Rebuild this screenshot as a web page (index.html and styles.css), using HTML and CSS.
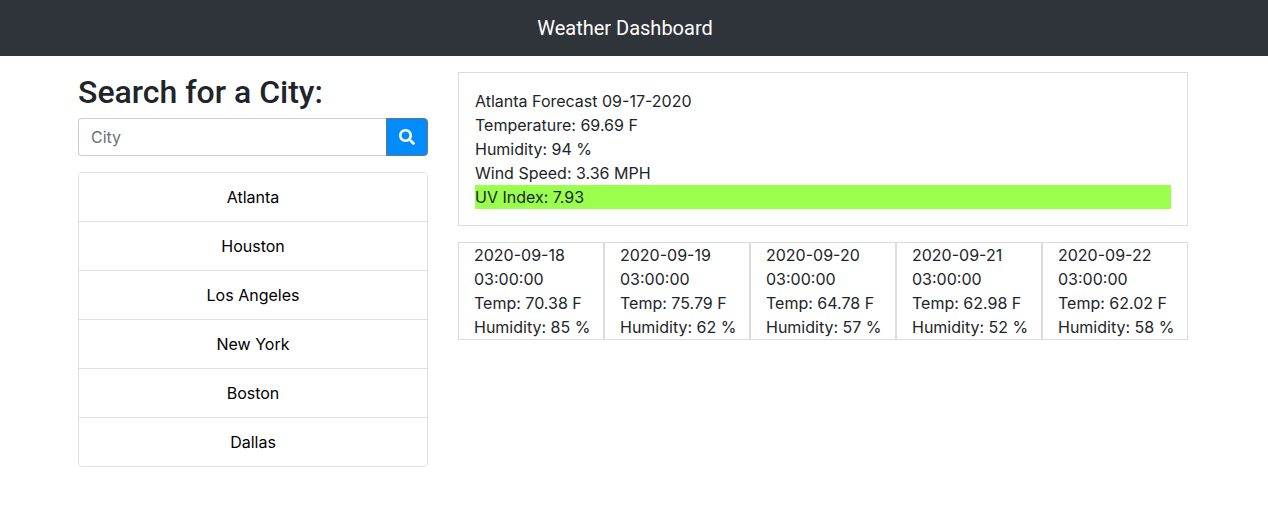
FILE: index.html
```html
<!DOCTYPE html>
<html lang="en">
<head>
<meta charset="utf-8">
<meta name="viewport" content="width=device-width, initial-scale=1">
<title>Weather Dashboard</title>
<link rel="stylesheet" href="styles.css">
</head>
<body>
<header class="navbar"><a class="brand" href="#">Weather Dashboard</a></header>
<main class="container">
  <aside class="sidebar">
    <h2 class="title"><label for="city">Search for a City:</label></h2>
    <form class="search">
      <input class="search-input" id="city" type="text" placeholder="City">
      <button class="search-button" type="button" aria-label="Search">
        <svg class="search-icon" viewBox="0 0 512 512" aria-hidden="true"><path fill="currentColor" d="M505 442.700L405.300 343c-4.500-4.500-10.600-7-17-7H372c27.600-35.300 44-79.700 44-128C416 93.100 322.900 0 208 0S0 93.100 0 208s93.100 208 208 208c48.300 0 92.700-16.400 128-44v16.300c0 6.400 2.500 12.500 7 17l99.700 99.700c9.400 9.400 24.600 9.400 33.900 0l28.300-28.300c9.400-9.400 9.400-24.600.1-34zM208 336c-70.700 0-128-57.200-128-128 0-70.700 57.200-128 128-128 70.700 0 128 57.200 128 128 0 70.700-57.200 128-128 128z"/></svg>
      </button>
    </form>
    <div class="cities">
      <button class="city" type="button">Atlanta</button>
      <button class="city" type="button">Houston</button>
      <button class="city" type="button">Los Angeles</button>
      <button class="city" type="button">New York</button>
      <button class="city" type="button">Boston</button>
      <button class="city" type="button">Dallas</button>
    </div>
  </aside>
  <section class="weather">
    <div class="current">
      <div>Atlanta Forecast 09-17-2020</div>
      <div>Temperature: 69.69 F</div>
      <div>Humidity: 94 %</div>
      <div>Wind Speed: 3.36 MPH</div>
      <div class="uv">UV Index: 7.93</div>
    </div>
    <div class="forecast">
      <div class="day"><div>2020-09-18 03:00:00</div><div>Temp: 70.38 F</div><div class="humidity">Humidity: 85 %</div></div>
      <div class="day"><div>2020-09-19 03:00:00</div><div>Temp: 75.79 F</div><div class="humidity">Humidity: 62 %</div></div>
      <div class="day"><div>2020-09-20 03:00:00</div><div>Temp: 64.78 F</div><div class="humidity">Humidity: 57 %</div></div>
      <div class="day"><div>2020-09-21 03:00:00</div><div>Temp: 62.98 F</div><div class="humidity">Humidity: 52 %</div></div>
      <div class="day"><div>2020-09-22 03:00:00</div><div>Temp: 62.02 F</div><div class="humidity">Humidity: 58 %</div></div>
    </div>
  </section>
</main>
</body>
</html>
```
FILE: styles.css
```css
*, *::before, *::after { box-sizing: border-box; }
body {
  margin: 0;
  background: #fff;
  color: #212529;
  font: 400 16px/24px Inter, "Liberation Sans", sans-serif;
}
.navbar {
  display: flex;
  justify-content: center;
  padding: 13px 34px 13px 16px;
  background: #2f333a;
}
.brand {
  color: #fff;
  font-family: Roboto, sans-serif;
  font-size: 20px;
  line-height: 30px;
  text-decoration: none;
}
.container {
  display: flex;
  flex-wrap: wrap;
  align-items: flex-start;
  gap: 30px;
  max-width: 1140px;
  margin: 0 auto;
  padding: 16px 16px 16px 14px;
}
.sidebar { flex: 1 1 350px; max-width: 350px; }
.title {
  margin: 0 0 6px;
  font-family: Roboto, sans-serif;
  font-size: 32px;
  font-weight: 500;
  line-height: 40px;
}
.search { display: flex; margin: 0 0 16px; }
.search-input {
  flex: 1;
  min-width: 0;
  height: 38px;
  padding: 6px 12px;
  border: 1px solid #c8cfd6;
  border-right: 0;
  border-radius: 4px 0 0 4px;
  color: #495057;
  font: inherit;
}
.search-input::placeholder { color: #66717a; opacity: 1; }
.search-button {
  display: flex;
  padding: 10px 12px;
  border: 1px solid #6c757d;
  border-radius: 0 4px 4px 0;
  background: #008bff;
  color: #fff;
}
.search-icon { width: 16px; height: 16px; }
.cities {
  display: flex;
  flex-direction: column;
  overflow: hidden;
  border: 1px solid #dfdfdf;
  border-radius: 4px;
}
.city {
  padding: 12px 20px;
  border: 0;
  background: #fff;
  color: #000;
  font: inherit;
}
.city + .city { border-top: 1px solid #dfdfdf; }
.weather { flex: 1 1 600px; min-width: 0; }
.current {
  margin-bottom: 16px;
  padding: 16px;
  border: 1px solid #d9dde1;
}
.uv { background: #9bff4d; }
.forecast { display: grid; grid-template-columns: repeat(5, minmax(0, 1fr)); }
.day { padding: 0 15px; border: 1px solid #d9dde1; }
.humidity { white-space: nowrap; }
```
